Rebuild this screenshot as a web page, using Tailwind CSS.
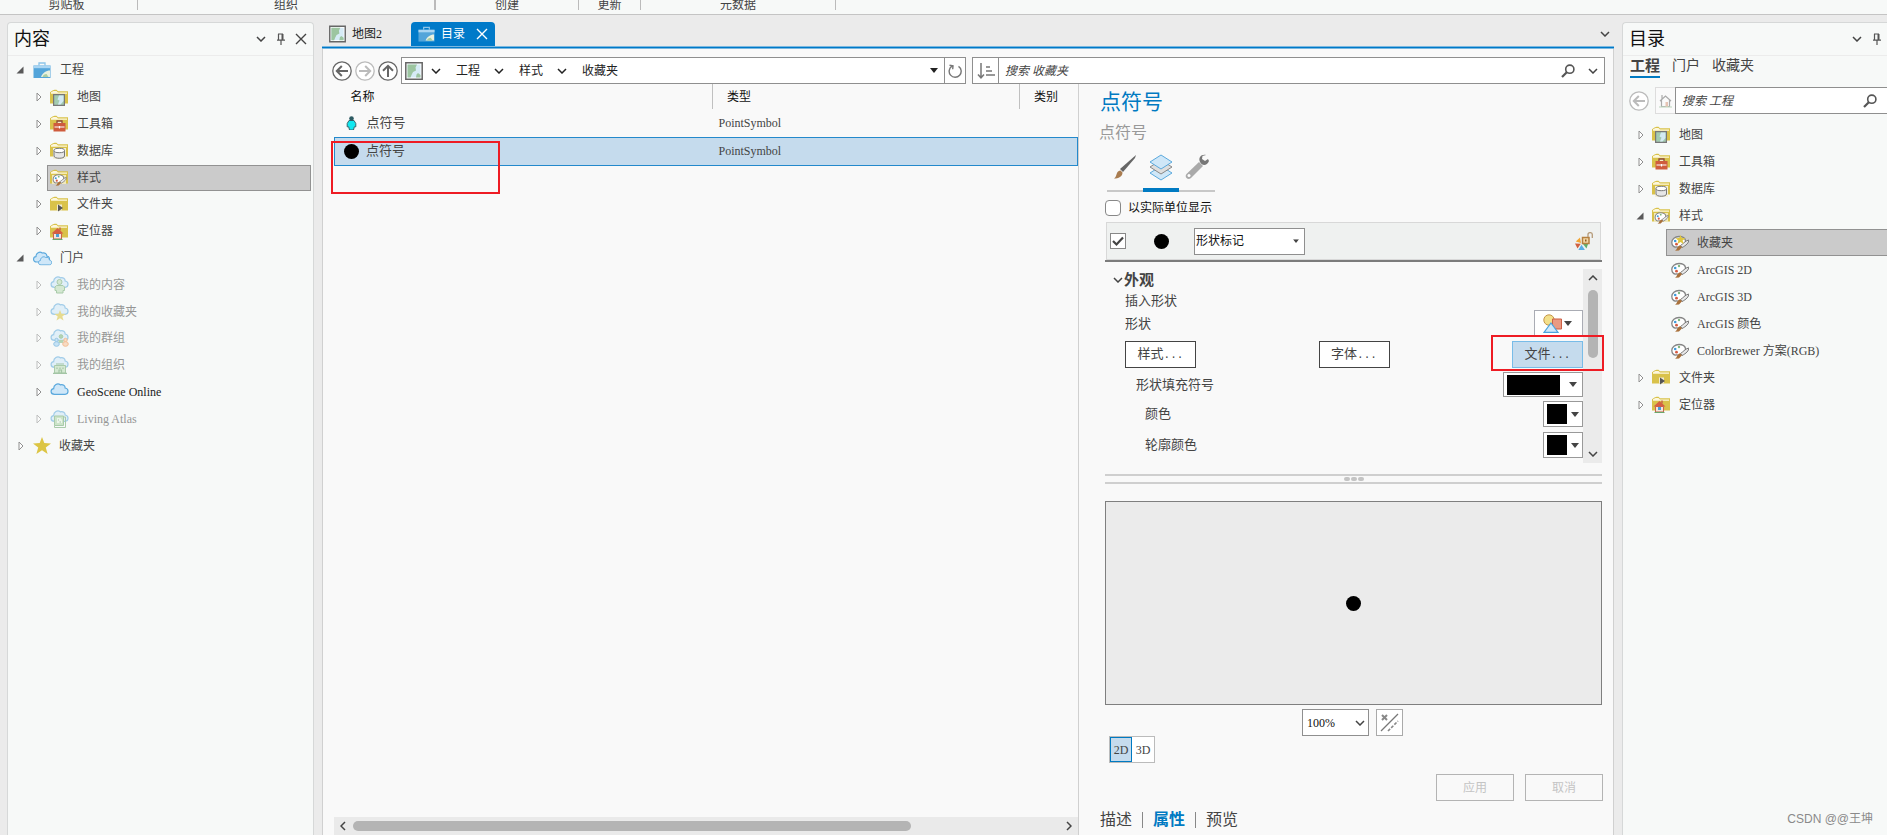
<!DOCTYPE html>
<html lang="zh-CN">
<head>
<meta charset="utf-8">
<title>目录</title>
<script src="https://cdn.jsdelivr.net/npm/@tailwindcss/browser@4"></script>
</head>
<body class="flex h-screen flex-col overflow-hidden bg-[#ebebeb] font-['Liberation_Serif','Noto_Sans_CJK_SC',serif] text-[12px] leading-4 text-[#444]">

<svg class="hidden" aria-hidden="true">
  <symbol id="open" viewBox="0 0 8 8"><path d="M7.5 .5v7h-7z" fill="#595959"/></symbol>
  <symbol id="closed" viewBox="0 0 6 10"><path d="M1 1v8l4-4z" fill="#fff" stroke="#909090"/></symbol>
  <symbol id="chev" viewBox="0 0 10 6"><path d="M1 1l4 4 4-4" fill="none" stroke="currentColor" stroke-width="1.5"/></symbol>
  <symbol id="tri" viewBox="0 0 8 5"><path d="M0 0h8L4 5z" fill="currentColor"/></symbol>
  <symbol id="x" viewBox="0 0 12 12"><path d="M1 1l10 10M11 1L1 11" fill="none" stroke="currentColor" stroke-width="1.4"/></symbol>
  <symbol id="pin" viewBox="0 0 10 12"><path d="M2.5 1v6M2 1h5M1 7.2h8M5 7.5V12" fill="none" stroke="#555" stroke-width="1.2"/><path d="M5.5 1h2v6h-2z" fill="#555"/></symbol>
  <symbol id="mag" viewBox="0 0 14 14"><circle cx="8.8" cy="5.2" r="4.1" fill="none" stroke="#555" stroke-width="1.6"/><path d="M5.8 8.2L1 13" stroke="#555" stroke-width="2.2"/></symbol>
  <symbol id="back" viewBox="0 0 20 20"><circle cx="10" cy="10" r="9.2" fill="#fff" stroke="currentColor" stroke-width="1.3"/><path d="M16 10H5M9.8 5L4.8 10l5 5" fill="none" stroke="currentColor" stroke-width="2"/></symbol>
  <symbol id="map" viewBox="0 0 18 18"><path d="M.8 .8h16.400v16.400H.8z" fill="#fff" stroke="#666" stroke-width="1.5"/><path d="M2.500 2.500h13v13h-13z" fill="#d6ebf6"/><path d="M2.500 2.500H12l-1.500 3 .5 3-3 1.500L6.500 13l-1 2.500h-3z" fill="#9cc5a0"/><path d="M11 15.500l.5-3 1.500-1.500 2.500 2v2.500z" fill="#9cc5a0"/></symbol>
  <symbol id="proj" viewBox="0 0 18 16"><path d="M6 3.500V1h6v2.500" fill="none" stroke="#8cc4e8" stroke-width="1.300"/><path d="M.5 3.500h17V16H.5z" fill="#53a5da"/><path d="M.5 3.500h17v2.700H.5z" fill="#a9d5f2"/><path d="M8 15c1.500-4 5-6.500 9-6.500V15z" fill="#e8f1df"/><path d="M9.500 15c.5-2 2-3 4-3l2 3z" fill="#a9cda2"/></symbol>
  <symbol id="folder" viewBox="0 0 18 17"><path d="M0 14.500V3.200L2.500 1.600l2-.8h2L8 2.300h10v12.200z" fill="#d9c24a"/><path d="M1 4.800V3.200L3.500 2h3L8 3.500h9v1.300z" fill="#fdf7dc"/></symbol>
  <symbol id="fmap" viewBox="0 0 18 17"><use href="#folder"/><path d="M3.600 5.600h10.800v10.800H3.600z" fill="#a3cbb0" stroke="#777" stroke-width="1.200"/><path d="M9 6.500h4.500v5.500l-3 3.500H8l1.500-4-2-1z" fill="#d3eaf3"/></symbol>
  <symbol id="ftool" viewBox="0 0 18 17"><use href="#folder"/><path d="M7 8V6h5v2" fill="#f7efc8" stroke="#8a4a35" stroke-width="1.300"/><path d="M3.500 8h12v8.500h-12z" fill="#cf5c3d"/><path d="M4.500 12h10M9.500 11v2.500" stroke="#fff" stroke-width="1.200"/></symbol>
  <symbol id="fdb" viewBox="0 0 18 17"><use href="#folder"/><path d="M3 6h13v11H3z" fill="#f4efd8"/><path d="M4 8.500v5.500c0 3 10.500 3 10.500 0V8.500" fill="#e6e6e6" stroke="#777"/><ellipse cx="9.250" cy="8.500" rx="5.250" ry="2.200" fill="#fff" stroke="#777"/></symbol>
  <symbol id="palette" viewBox="0 0 18 16"><path d="M8 1.500C4 1.500 .8 4 .8 7.300S3 12.500 5 12c1.500-.4 3 .6 4.500 0C12 11 15 8.500 14.500 5.500 14 3 11 1.500 8 1.500z" fill="#fff" stroke="#858585" stroke-width="1.300"/><circle cx="4.200" cy="6" r="1.300" fill="#3d9ad8"/><circle cx="8" cy="4" r="1.200" fill="#7fb77e"/><circle cx="5.500" cy="9.200" r="1.400" fill="#d65a40"/><path d="M17.600 5c.6 2.500-2.500 5.500-6.600 7.500l-1.500-2C12 9 14 6 17.600 5z" fill="#e8e8e8" stroke="#777"/><path d="M9 10.200l2 2L8 15.500l-4 .3c2-1 2-4.600 5-5.600z" fill="#a9713b"/></symbol>
  <symbol id="pstar" viewBox="0 0 18 16"><use href="#palette"/><path d="M9.500 0l1.300 3 3.700.2-2.900 2.200 1 3.600-3.100-2-3.100 2 1-3.600-2.900-2.200 3.700-.2z" fill="#e0c63d"/></symbol>
  <symbol id="fstyle" viewBox="0 0 18 17"><use href="#folder"/><path d="M2 6h14v9H2z" fill="#f1e9bc"/><use href="#palette" x="2" y="4.500" width="15" height="12.500"/></symbol>
  <symbol id="ffold" viewBox="0 0 18 17"><use href="#folder"/><path d="M7 8.500h5v6H7z" fill="#f1ead0"/><path d="M8 8.500v7l5-3.500z" fill="#555"/></symbol>
  <symbol id="floc" viewBox="0 0 18 17"><use href="#folder"/><path d="M3.500 10.500h8V16h-8z" fill="#f3e6df" stroke="#c9654a"/><path d="M1.500 10.500L7.500 5l6 5.500z" fill="#d65f43"/><path d="M10 4.500v3" stroke="#c9654a" stroke-width="1.500"/><path d="M6 11h3v3H6z" fill="#4a9fd8"/><path d="M2.500 16.500h10" stroke="#6aa86a" stroke-width="1.200"/></symbol>
  <symbol id="cloud" viewBox="0 0 18 12"><path d="M4 11.300C-.5 11.300-.3 6 3.200 5.600 3 2 7-.5 9.800 1.800c2.700-.8 5 .8 4.800 3.200 4 .5 3.800 6.300 0 6.300z" fill="#cfe7f8" stroke="#5ba9dd" stroke-width="1.200"/></symbol>
  <symbol id="clouds" viewBox="0 0 19 16"><use href="#cloud" y="1" width="17" height="12"/><use href="#cloud" x="5" y="6" width="14" height="9.500"/></symbol>
  <symbol id="cuser" viewBox="0 0 19 18"><use href="#cloud" width="19" height="12"/><circle cx="9.500" cy="6" r="2.500" fill="#b9dbb4" stroke="#6ba66b"/><path d="M6.500 9.500h6.500l1.500 1.500v3.500h-1.500V17h-6.500v-2.500H5V11z" fill="#b9dbb4" stroke="#6ba66b"/></symbol>
  <symbol id="cstar" viewBox="0 0 19 18"><use href="#cloud" width="19" height="12"/><path d="M10 7l1.500 3.800 4 .2-3.200 2.500 1.200 4L10 15.300l-3.500 2.200 1.200-4L4.500 11l4-.2z" fill="#d9c43c"/></symbol>
  <symbol id="cgrp" viewBox="0 0 19 18"><use href="#cloud" width="19" height="12"/><circle cx="11" cy="7.500" r="1.800" fill="#7fb77e" stroke="#6ba66b"/><path d="M8.500 14v-3h5v3z" fill="#7fb77e"/><circle cx="6.500" cy="11" r="1.700" fill="#9fd0f2" stroke="#4a9fd8"/><ellipse cx="6.500" cy="15" rx="2.800" ry="2.300" fill="#9fd0f2" stroke="#4a9fd8"/><circle cx="15.500" cy="11" r="1.700" fill="#f8c398" stroke="#f09148"/><ellipse cx="15.500" cy="15" rx="2.800" ry="2.300" fill="#f8c398" stroke="#f09148"/></symbol>
  <symbol id="corg" viewBox="0 0 19 18"><use href="#cloud" width="19" height="12"/><path d="M4.500 17V9.500h11V17z" fill="#b9dbb4" stroke="#6ba66b"/><path d="M6 8h8M3 17.300h14M9 17v-3h2.500v3M7 11.500v1.500M10 11.500v1.500M13 11.500v1.500" fill="none" stroke="#5f9c62" stroke-width="1.200"/></symbol>
  <symbol id="catlas" viewBox="0 0 19 18"><use href="#cloud" width="19" height="12"/><path d="M4.500 6h9v9.500h-9z" fill="#a9d3a4" stroke="#6ba66b"/><path d="M4.500 15.500v2h11V7h-2" fill="none" stroke="#6ba66b"/><path d="M7 8h3.500l1.500 2v3H7z" fill="#e3f2df"/><path d="M8 10h1M9.500 12H11" stroke="#5f9c62"/></symbol>
  <symbol id="star" viewBox="0 0 18 17"><path d="M9 0l2.300 6.100L18 6.400l-5.200 4.100 1.800 6.500L9 13.300 3.400 17l1.800-6.500L0 6.400l6.700-.3z" fill="#dcc544"/></symbol>
</svg>

<!-- Ribbon group captions -->
<header class="flex h-[15px] shrink-0 border-b border-[#c4c4c4] bg-[#f7f9f8] text-center leading-[10px]">
  <div class="w-[137px] shrink-0 pr-1">剪贴板</div>
  <div class="h-2.5 w-px bg-[#bbb]"></div>
  <div class="w-[296px] shrink-0">组织</div>
  <div class="h-2.5 w-0.5 bg-[#bbb]"></div>
  <div class="w-[142px] shrink-0">创建</div>
  <div class="h-2.5 w-px bg-[#bbb]"></div>
  <div class="w-[61px] shrink-0">更新</div>
  <div class="h-2.5 w-px bg-[#bbb]"></div>
  <div class="w-[194px] shrink-0">元数据</div>
  <div class="h-2.5 w-px bg-[#bbb]"></div>
</header>

<div class="flex min-h-0 flex-1 pt-[7px] pl-[7px]">

  <!-- Contents pane -->
  <aside class="mr-2 flex w-[307px] shrink-0 flex-col rounded-t border border-b-0 border-[#d6d8d8] bg-[#f7f9f8]">
    <div class="flex h-[33px] shrink-0 items-center border-b border-[#ececec] pr-0.5 pl-1.5">
      <h2 class="flex-1 text-[18px] leading-6 text-[#111]">内容</h2>
      <button class="flex w-5 justify-center" aria-label="菜单"><svg class="h-1.5 w-2.5"><use href="#chev"/></svg></button>
      <button class="flex w-5 justify-center" aria-label="固定"><svg class="h-3 w-2.5"><use href="#pin"/></svg></button>
      <button class="flex w-5 justify-center" aria-label="关闭"><svg class="h-3 w-3"><use href="#x"/></svg></button>
    </div>
    <ul class="mt-px grid h-[402px] auto-rows-fr pr-0.5 pl-2">
      <li class="flex items-center"><svg class="mr-[9px] h-2 w-2"><use href="#open"/></svg><svg class="mr-[9px] h-4 w-[18px]"><use href="#proj"/></svg>工程</li>
      <li class="flex items-center pl-5"><svg class="mr-[3px] h-2.5 w-1.5"><use href="#closed"/></svg><span class="flex flex-1 items-center gap-[9px] py-1 pl-[5px]"><svg class="h-[17px] w-[18px]"><use href="#fmap"/></svg>地图</span></li>
      <li class="flex items-center pl-5"><svg class="mr-[3px] h-2.5 w-1.5"><use href="#closed"/></svg><span class="flex flex-1 items-center gap-[9px] py-1 pl-[5px]"><svg class="h-[17px] w-[18px]"><use href="#ftool"/></svg>工具箱</span></li>
      <li class="flex items-center pl-5"><svg class="mr-[3px] h-2.5 w-1.5"><use href="#closed"/></svg><span class="flex flex-1 items-center gap-[9px] py-1 pl-[5px]"><svg class="h-[17px] w-[18px]"><use href="#fdb"/></svg>数据库</span></li>
      <li class="flex items-center pl-5"><svg class="mr-[3px] h-2.5 w-1.5"><use href="#closed"/></svg><span class="ml-0.5 flex h-[26px] flex-1 items-center gap-[9px] border border-[#929292] bg-[#cbcbcb] pl-0.5"><svg class="h-[17px] w-[18px]"><use href="#fstyle"/></svg>样式</span></li>
      <li class="flex items-center pl-5"><svg class="mr-[3px] h-2.5 w-1.5"><use href="#closed"/></svg><span class="flex flex-1 items-center gap-[9px] py-1 pl-[5px]"><svg class="h-[17px] w-[18px]"><use href="#ffold"/></svg>文件夹</span></li>
      <li class="flex items-center pl-5"><svg class="mr-[3px] h-2.5 w-1.5"><use href="#closed"/></svg><span class="flex flex-1 items-center gap-[9px] py-1 pl-[5px]"><svg class="h-[17px] w-[18px]"><use href="#floc"/></svg>定位器</span></li>
      <li class="flex items-center"><svg class="mr-[9px] h-2 w-2"><use href="#open"/></svg><svg class="mr-2 h-4 w-[19px]"><use href="#clouds"/></svg>门户</li>
      <li class="flex items-center pl-5 opacity-55"><svg class="mr-2 h-2.5 w-1.5"><use href="#closed"/></svg><svg class="mr-2 h-[18px] w-[19px]"><use href="#cuser"/></svg>我的内容</li>
      <li class="flex items-center pl-5 opacity-55"><svg class="mr-2 h-2.5 w-1.5"><use href="#closed"/></svg><svg class="mr-2 h-[18px] w-[19px]"><use href="#cstar"/></svg>我的收藏夹</li>
      <li class="flex items-center pl-5 opacity-55"><svg class="mr-2 h-2.5 w-1.5"><use href="#closed"/></svg><svg class="mr-2 h-[18px] w-[19px]"><use href="#cgrp"/></svg>我的群组</li>
      <li class="flex items-center pl-5 opacity-55"><svg class="mr-2 h-2.5 w-1.5"><use href="#closed"/></svg><svg class="mr-2 h-[18px] w-[19px]"><use href="#corg"/></svg>我的组织</li>
      <li class="flex items-center pl-5 text-[#222]"><svg class="mr-2 h-2.5 w-1.5"><use href="#closed"/></svg><svg class="mr-2 mb-1.5 h-3 w-[19px]"><use href="#cloud"/></svg>GeoScene Online</li>
      <li class="flex items-center pl-5 opacity-55"><svg class="mr-2 h-2.5 w-1.5"><use href="#closed"/></svg><svg class="mr-2 h-[18px] w-[19px]"><use href="#catlas"/></svg>Living Atlas</li>
      <li class="flex items-center pl-0.5"><svg class="mr-[9px] h-2.5 w-1.5"><use href="#closed"/></svg><svg class="mr-2 h-[17px] w-[18px]"><use href="#star"/></svg>收藏夹</li>
    </ul>
  </aside>

  <!-- Catalog view -->
  <main class="flex min-w-0 flex-1 flex-col">
    <div class="flex h-6 shrink-0 items-center pr-1">
      <a href="#" class="flex w-[89px] items-center gap-1.5 pl-[7px] text-[#222]"><svg class="h-[18px] w-[17px]"><use href="#map"/></svg>地图2</a>
      <a href="#" class="flex h-6 w-[84px] items-center rounded-t bg-[#007ac9] pl-[7px] text-white"><svg class="mr-1.5 h-4 w-[17px]"><use href="#proj"/></svg>目录<svg class="ml-[11px] h-3 w-3"><use href="#x"/></svg></a>
      <button class="ml-auto" aria-label="窗口列表"><svg class="h-1.5 w-2.5"><use href="#chev"/></svg></button>
    </div>
    <div class="h-[3px] shrink-0 border-y border-[#7ab8e0] bg-[#0079c8]"></div>

    <div class="flex min-h-0 flex-1 flex-col border-x border-[#d0d0d0] bg-[#f9f9f9]">
      <!-- Location and search bar -->
      <div class="mt-2 mr-2 ml-[9px] flex h-[27px] shrink-0 items-center">
        <button class="mr-[3px] text-[#666]" aria-label="后退"><svg class="h-5 w-5"><use href="#back"/></svg></button>
        <button class="mr-[3px] text-[#bbb]" aria-label="前进"><svg class="h-5 w-5 rotate-180"><use href="#back"/></svg></button>
        <button class="mr-[3px] text-[#666]" aria-label="向上"><svg class="h-5 w-5 rotate-90"><use href="#back"/></svg></button>
        <nav class="flex h-full w-[544px] items-center border border-[#8f8f8f] bg-white pl-[3px] text-[#222]">
          <svg class="mr-2 h-[18px] w-[18px]"><use href="#map"/></svg><svg class="mr-[15px] h-1.5 w-2.5"><use href="#chev"/></svg>
          <a href="#" class="mr-3.5">工程</a><svg class="mr-[15px] h-1.5 w-2.5"><use href="#chev"/></svg>
          <a href="#" class="mr-3.5">样式</a><svg class="mr-[15px] h-1.5 w-2.5"><use href="#chev"/></svg>
          <a href="#">收藏夹</a>
          <svg class="mr-1.5 ml-auto h-[5px] w-2"><use href="#tri"/></svg>
        </nav>
        <button class="-ml-px flex h-full w-[22px] items-center justify-center border border-[#8f8f8f] bg-white" aria-label="刷新"><svg class="h-3.5 w-3.5" viewBox="0 0 14 14"><path d="M10.500 2.300A6 6 0 1 1 4 2.200M1.500 1.200l3.500.6-.3 3.400" fill="none" stroke="#777" stroke-width="1.400"/></svg></button>
        <button class="ml-1.5 flex h-full w-[27px] items-center justify-center border border-[#8f8f8f] bg-white" aria-label="排序"><svg class="h-4 w-[18px]" viewBox="0 0 18 16"><path d="M4 0v14.500M1 11.500l3 3.300 3-3.300M9 4h4M9 8h6M9 12h9" fill="none" stroke="#777" stroke-width="1.500"/></svg></button>
        <div class="-ml-px flex h-full min-w-0 flex-1 items-center border border-[#8f8f8f] bg-white pr-1.5">
          <input type="text" aria-label="搜索收藏夹" placeholder="搜索 收藏夹" class="min-w-0 flex-1 pl-1.5 italic outline-none placeholder:text-[#444]">
          <svg class="mr-[13px] h-3.5 w-3.5"><use href="#mag"/></svg><svg class="h-1.5 w-2.5"><use href="#chev"/></svg>
        </div>
      </div>

      <div class="flex min-h-0 flex-1">
        <!-- Item list -->
        <section class="relative flex min-w-0 flex-1 flex-col border-r border-[#d0d0d0] pl-[11px]">
          <table class="w-full table-fixed border-collapse text-left">
            <colgroup><col class="w-[378px]"><col class="w-[307px]"><col></colgroup>
            <thead><tr class="h-[25px] text-[#111]"><th class="border-r border-[#c0c0c0] pl-4 font-normal">名称</th><th class="border-r border-[#c0c0c0] pl-3.5 font-normal">类型</th><th class="pl-3.5 font-normal">类别</th></tr></thead>
            <tbody>
              <tr class="h-7"><td><span class="flex items-center gap-2.5 pl-[11px] text-[13px]"><svg class="h-3.5 w-[11px]" viewBox="0 0 11 14"><path d="M3 4.500h5l1.800 3v3.300H8.300L7.500 14h-4l-.8-3.200H1.200V7.500z" fill="#12e8f0" stroke="#35646c"/><circle cx="5.500" cy="2.500" r="2.300" fill="#2d5a62"/></svg>点符号</span></td><td class="pl-1.5">PointSymbol</td><td></td></tr>
              <tr class="h-7 border border-[#2389cc] bg-[#c5dbed]"><td><span class="flex items-center gap-[7px] pl-[9px] text-[13px]"><svg class="h-[15px] w-[15px]" viewBox="0 0 15 15"><circle cx="7.500" cy="7.500" r="7.500"/></svg>点符号</span></td><td class="pl-1.5">PointSymbol</td><td></td></tr>
            </tbody>
          </table>
          <div class="absolute top-[57px] left-2 h-[53px] w-[169px] border-2 border-[#ee1c24]"></div>
          <div class="mt-auto flex h-[18px] items-center bg-[#eaeaea] px-1">
            <svg class="h-1.5 w-2.5 rotate-90"><use href="#chev"/></svg>
            <div class="mx-[5px] flex-1"><div class="h-2.5 w-[79%] rounded-full bg-[#b4b4b4]"></div></div>
            <svg class="h-1.5 w-2.5 -rotate-90"><use href="#chev"/></svg>
          </div>
        </section>

        <!-- Symbol properties -->
        <section class="flex w-[534px] shrink-0 flex-col pr-[11px] pl-[26px]">
          <h2 class="mt-1 -ml-[5px] text-[21px] leading-7 text-[#007ac2]">点符号</h2>
          <p class="mt-[5px] -ml-1.5 text-[16px] leading-6 text-[#999]">点符号</p>
          <div class="mt-[7px] ml-0.5 flex h-10 w-[108px] border-b-2 border-[#c8c8c8]">
            <button class="flex h-10 w-9 justify-center" aria-label="图库"><svg class="mt-[3px] h-6 w-6" viewBox="0 0 24 24"><path d="M23 0l-1 3L10 17l-3-3z" fill="#666"/><path d="M7.500 15.500l2 2c0 4-4 6-8.500 6 2-1 2-3 3-5.500.6-1.500 2-2.500 3.500-2.500z" fill="#a97c50"/></svg></button>
            <button class="flex h-10 w-9 justify-center border-b-4 border-[#007ac2]" aria-label="图层"><svg class="mt-0.5 h-[27px] w-6 shrink-0" viewBox="0 0 24 27"><path d="M12 12l11 7-11 7-11-7z" fill="#cfe7f8" stroke="#5ba9dd"/><path d="M12 6l11 7-11 7-11-7z" fill="#dedede" stroke="#888"/><path d="M12 1l11 7-11 7L1 8z" fill="#cfe7f8" stroke="#5ba9dd"/></svg></button>
            <button class="flex h-10 w-9 justify-center" aria-label="结构"><svg class="mt-0.5 h-[26px] w-[25px]" viewBox="0 0 25 26"><path d="M14 8l4 4L6 24c-3 3-7-1-4.500-4z" fill="#aaa"/><circle cx="4" cy="21.500" r="1.500" fill="#fff"/><path d="M21 1c-5-1-8 3-6 7s7 4 9-1l-1-2-3 2-3-2 .5-3z" fill="#777"/></svg></button>
          </div>
          <label class="mt-2 flex h-4 items-center gap-[7px] leading-5 text-[#111]"><input type="checkbox" class="h-4 w-4 appearance-none rounded-sm border border-[#888] bg-white">以实际单位显示</label>
          <div class="mt-1.5 mr-px ml-px flex h-[38px] shrink-0 items-center border border-[#d8d8d8] bg-[#eff1f0] pr-[7px] pl-[3px]">
            <span class="relative flex h-4 w-4"><input type="checkbox" checked aria-label="启用图层" class="h-4 w-4 appearance-none border border-[#888] bg-white"><svg class="pointer-events-none absolute inset-0 h-4 w-4" viewBox="0 0 16 16"><path d="M3 8l3.500 3.500 6.500-7" fill="none" stroke="#444" stroke-width="2.200"/></svg></span>
            <svg class="ml-7 h-[15px] w-[15px]" viewBox="0 0 15 15"><circle cx="7.500" cy="7.500" r="7.500"/></svg>
            <span class="relative ml-[25px] flex h-[27px] w-[111px] items-center"><select aria-label="图层类型" class="h-full w-full appearance-none border border-[#8f8f8f] bg-white pl-px text-[#111]"><option>形状标记</option></select><svg class="pointer-events-none absolute right-1.5 h-1 w-1.5" viewBox="0 0 8 5"><use href="#tri"/></svg></span>
            <svg class="ml-auto h-[18px] w-[18px]" viewBox="0 0 18 18"><path d="M6 11L.8 9.500 5 5.500z" fill="#f3a531"/><path d="M5.800 11.800L0 11.500l2.500 5z" fill="#d0603f"/><path d="M6.500 12.800L3.300 18h6.600z" fill="#58aee6"/><path d="M8 12l3.500 4.500L13 12z" fill="#5fae6c"/><path d="M7.500 5.500h6.500v6H7.500z" fill="#f3d7a6" stroke="#b5803f" stroke-width="1.500"/><path d="M13 5V2.500c0-2.500 4.300-2.500 4.300 0V6" fill="none" stroke="#b59a78" stroke-width="1.300"/><path d="M10 7.500h1.500v2H10z" fill="#8a5a20"/></svg>
          </div>
          <div class="h-0.5 shrink-0 bg-[#7c7c7c]"></div>

          <div class="relative mt-[7px] flex h-[194px] shrink-0">
            <div class="flex flex-1 flex-col pl-5 text-[13px]">
              <h3 class="-ml-3 flex h-[22px] items-center text-[15px] font-bold"><svg class="mr-px h-1.5 w-2.5"><use href="#chev"/></svg>外观</h3>
              <div class="h-[19px] leading-[19px]">插入形状</div>
              <div class="flex h-[27px] items-center justify-between">形状
                <button class="flex h-full w-[49px] items-center gap-0.5 border border-[#aaacb4] bg-white pl-2" aria-label="选择形状"><svg class="h-[19px] w-[19px]" viewBox="0 0 19 19"><circle cx="6" cy="6" r="5.200" fill="#f3e08b" stroke="#c4964a"/><path d="M9.500 5h9v10h-9z" fill="#e99a83" stroke="#cd5f45"/><path d="M8 9l7 9.300H1z" fill="#cfe9fb" stroke="#4ba3de" stroke-width="1.200"/></svg><svg class="h-[5px] w-2"><use href="#tri"/></svg></button>
              </div>
              <div class="mt-1 flex h-[27px] justify-between">
                <button class="w-[71px] border border-[#444] bg-white">样式<span class="font-['Liberation_Mono',monospace] text-[11px]">...</span></button>
                <button class="w-[71px] border border-[#444] bg-white">字体<span class="font-['Liberation_Mono',monospace] text-[11px]">...</span></button>
                <button class="w-[71px] border border-[#78bce8] bg-[#c5dbed]">文件<span class="font-['Liberation_Mono',monospace] text-[11px]">...</span></button>
              </div>
              <div class="mt-1 flex h-[25px] items-center justify-between pl-[11px]">形状填充符号
                <button class="flex h-full w-20 items-center gap-[9px] border border-[#999] bg-white pl-[3px]" aria-label="填充符号"><span class="h-5 w-[53px] bg-black"></span><svg class="h-[5px] w-2"><use href="#tri"/></svg></button>
              </div>
              <div class="mt-1 flex h-[26px] items-center justify-between pl-5">颜色
                <button class="flex h-full w-10 items-center gap-1 border border-[#999] bg-white pl-[3px]" aria-label="颜色"><span class="h-5 w-5 bg-black"></span><svg class="h-[5px] w-2"><use href="#tri"/></svg></button>
              </div>
              <div class="mt-[5px] flex h-[26px] items-center justify-between pl-5">轮廓颜色
                <button class="flex h-full w-10 items-center gap-1 border border-[#999] bg-white pl-[3px]" aria-label="轮廓颜色"><span class="h-5 w-5 bg-black"></span><svg class="h-[5px] w-2"><use href="#tri"/></svg></button>
              </div>
            </div>
            <div class="flex w-[19px] flex-col items-center justify-between bg-[#ebebeb] py-1.5">
              <svg class="h-1.5 w-2.5 rotate-180"><use href="#chev"/></svg>
              <div class="mt-[9px] mb-auto h-[68px] w-2.5 rounded-full bg-[#b4b4b4]"></div>
              <svg class="h-1.5 w-2.5"><use href="#chev"/></svg>
            </div>
            <div class="absolute top-[66px] -right-0.5 h-9 w-[113px] border-2 border-[#ee1c24]"></div>
          </div>

          <div class="mt-[11px] flex h-2.5 shrink-0 items-center justify-center gap-px border-y-2 border-[#cfcfcf]">
            <span class="h-1 w-1.5 rounded-full bg-[#c4c4c4]"></span><span class="h-1 w-1.5 rounded-full bg-[#c4c4c4]"></span><span class="h-1 w-1.5 rounded-full bg-[#c4c4c4]"></span>
          </div>

          <div class="mt-[17px] flex min-h-0 flex-1 items-center justify-center border border-[#7f7f7f] bg-[#ebebeb]"><svg class="h-[15px] w-[15px]" viewBox="0 0 15 15"><circle cx="7.500" cy="7.500" r="7.500"/></svg></div>
          <div class="mt-1 flex h-[27px] shrink-0 justify-center gap-[7px] pr-0.5">
            <span class="relative flex h-full w-[67px] items-center"><select aria-label="缩放" class="h-full w-full appearance-none border border-[#8f8f8f] bg-white pl-1 text-[#111]"><option>100%</option></select><svg class="pointer-events-none absolute right-1 h-1.5 w-2.5"><use href="#chev"/></svg></span>
            <button class="flex w-[27px] items-center justify-center border border-[#aaa] bg-white" aria-label="切换预览"><svg class="h-[19px] w-[19px]" viewBox="0 0 19 19"><path d="M1 18L18 1" stroke="#777" stroke-width="1.300"/><path d="M2 2l5 5M7 2L2 7" stroke="#888" stroke-width="2"/><path d="M8 18L18 8" stroke="#888" stroke-width="1.600" stroke-dasharray="3 1.500"/></svg></button>
          </div>
          <div class="ml-1 flex h-[27px] w-[46px] shrink-0 border border-[#bbb] bg-white">
            <button class="w-[22px] border border-[#007ac2] bg-[#c5dbed]">2D</button>
            <button class="flex-1">3D</button>
          </div>
          <div class="mt-[11px] -mr-px flex h-[27px] shrink-0 justify-end gap-[11px]">
            <button disabled class="w-[78px] border border-[#b4b4b4] text-[#c4c4c4]">应用</button>
            <button disabled class="w-[78px] border border-[#b4b4b4] text-[#c4c4c4]">取消</button>
          </div>
          <nav class="-ml-[5px] flex h-[34px] shrink-0 items-center pt-[3px] text-[16px]">
            <a href="#">描述</a><span class="mx-[10px] h-4 w-px bg-[#888]"></span>
            <a href="#" class="font-bold text-[#007ac2]">属性</a><span class="mx-[10px] h-4 w-px bg-[#888]"></span>
            <a href="#">预览</a>
          </nav>
        </section>
      </div>
    </div>
  </main>

  <!-- Catalog pane -->
  <aside class="relative ml-2 flex w-[265px] shrink-0 flex-col rounded-tl border-t border-l border-[#d6d8d8] bg-[#f7f9f8]">
    <div class="flex h-[33px] shrink-0 items-center border-b border-[#ececec] pl-1.5">
      <h2 class="flex-1 text-[18px] leading-6 text-[#111]">目录</h2>
      <button class="flex w-5 justify-center" aria-label="菜单"><svg class="h-1.5 w-2.5"><use href="#chev"/></svg></button>
      <button class="flex w-5 justify-center" aria-label="固定"><svg class="h-3 w-2.5"><use href="#pin"/></svg></button>
    </div>
    <nav class="flex h-[22px] shrink-0 gap-3 pl-[7px] text-[14px] leading-5">
      <a href="#" class="border-b-2 border-[#007ac2] text-[15px] font-bold">工程</a><a href="#">门户</a><a href="#">收藏夹</a>
    </nav>
    <div class="mt-[9px] flex h-[27px] shrink-0 items-center pl-1.5">
      <button class="mr-1.5 text-[#bbb]" aria-label="后退"><svg class="h-5 w-5"><use href="#back"/></svg></button>
      <button class="flex h-full w-5 items-center justify-center border border-r-0 border-[#ddd] bg-[#fafafa]" aria-label="主页"><svg class="h-3.5 w-[13px]" viewBox="0 0 13 14"><path d="M1 7l5.500-5L12 7M2.500 6v6.500h8V6M3 1v4" fill="none" stroke="#aaa" stroke-width="1.200"/><path d="M6.500 8h2.500v5H6.500z" fill="#e6c4b4"/><path d="M0 13h13" stroke="#bcd6bc"/></svg></button>
      <div class="flex h-full min-w-0 flex-1 items-center border border-r-0 border-[#8f8f8f] bg-white pr-2.5">
        <input type="text" aria-label="搜索工程" placeholder="搜索 工程" class="min-w-0 flex-1 pl-1.5 italic outline-none placeholder:text-[#444]"><svg class="h-3.5 w-3.5"><use href="#mag"/></svg>
      </div>
    </div>
    <ul class="mt-[7px] pl-[15px]">
      <li class="flex h-[27px] items-center"><svg class="mr-2 h-2.5 w-1.5"><use href="#closed"/></svg><svg class="mr-[9px] h-[17px] w-[18px]"><use href="#fmap"/></svg>地图</li>
      <li class="flex h-[27px] items-center"><svg class="mr-2 h-2.5 w-1.5"><use href="#closed"/></svg><svg class="mr-[9px] h-[17px] w-[18px]"><use href="#ftool"/></svg>工具箱</li>
      <li class="flex h-[27px] items-center"><svg class="mr-2 h-2.5 w-1.5"><use href="#closed"/></svg><svg class="mr-[9px] h-[17px] w-[18px]"><use href="#fdb"/></svg>数据库</li>
      <li class="flex h-[27px] items-center"><svg class="-ml-0.5 mr-2 h-2 w-2"><use href="#open"/></svg><svg class="mr-[9px] h-[17px] w-[18px]"><use href="#fstyle"/></svg>样式</li>
      <li class="ml-7 flex h-[27px] items-center border border-r-0 border-[#929292] bg-[#cbcbcb] pl-1"><svg class="mr-2 h-4 w-[18px]"><use href="#pstar"/></svg>收藏夹</li>
      <li class="ml-[33px] flex h-[27px] items-center"><svg class="mr-2 h-4 w-[18px]"><use href="#palette"/></svg>ArcGIS 2D</li>
      <li class="ml-[33px] flex h-[27px] items-center"><svg class="mr-2 h-4 w-[18px]"><use href="#palette"/></svg>ArcGIS 3D</li>
      <li class="ml-[33px] flex h-[27px] items-center"><svg class="mr-2 h-4 w-[18px]"><use href="#palette"/></svg>ArcGIS 颜色</li>
      <li class="ml-[33px] flex h-[27px] items-center"><svg class="mr-2 h-4 w-[18px]"><use href="#palette"/></svg>ColorBrewer 方案(RGB)</li>
      <li class="flex h-[27px] items-center"><svg class="mr-2 h-2.5 w-1.5"><use href="#closed"/></svg><svg class="mr-[9px] h-[17px] w-[18px]"><use href="#ffold"/></svg>文件夹</li>
      <li class="flex h-[27px] items-center"><svg class="mr-2 h-2.5 w-1.5"><use href="#closed"/></svg><svg class="mr-[9px] h-[17px] w-[18px]"><use href="#floc"/></svg>定位器</li>
    </ul>
    <div class="mt-auto pr-3.5 pb-2 text-right font-['Liberation_Sans','Noto_Sans_CJK_SC',sans-serif] text-[#8a8a8a]">CSDN @@王坤</div>
  </aside>
</div>
</body>
</html>
